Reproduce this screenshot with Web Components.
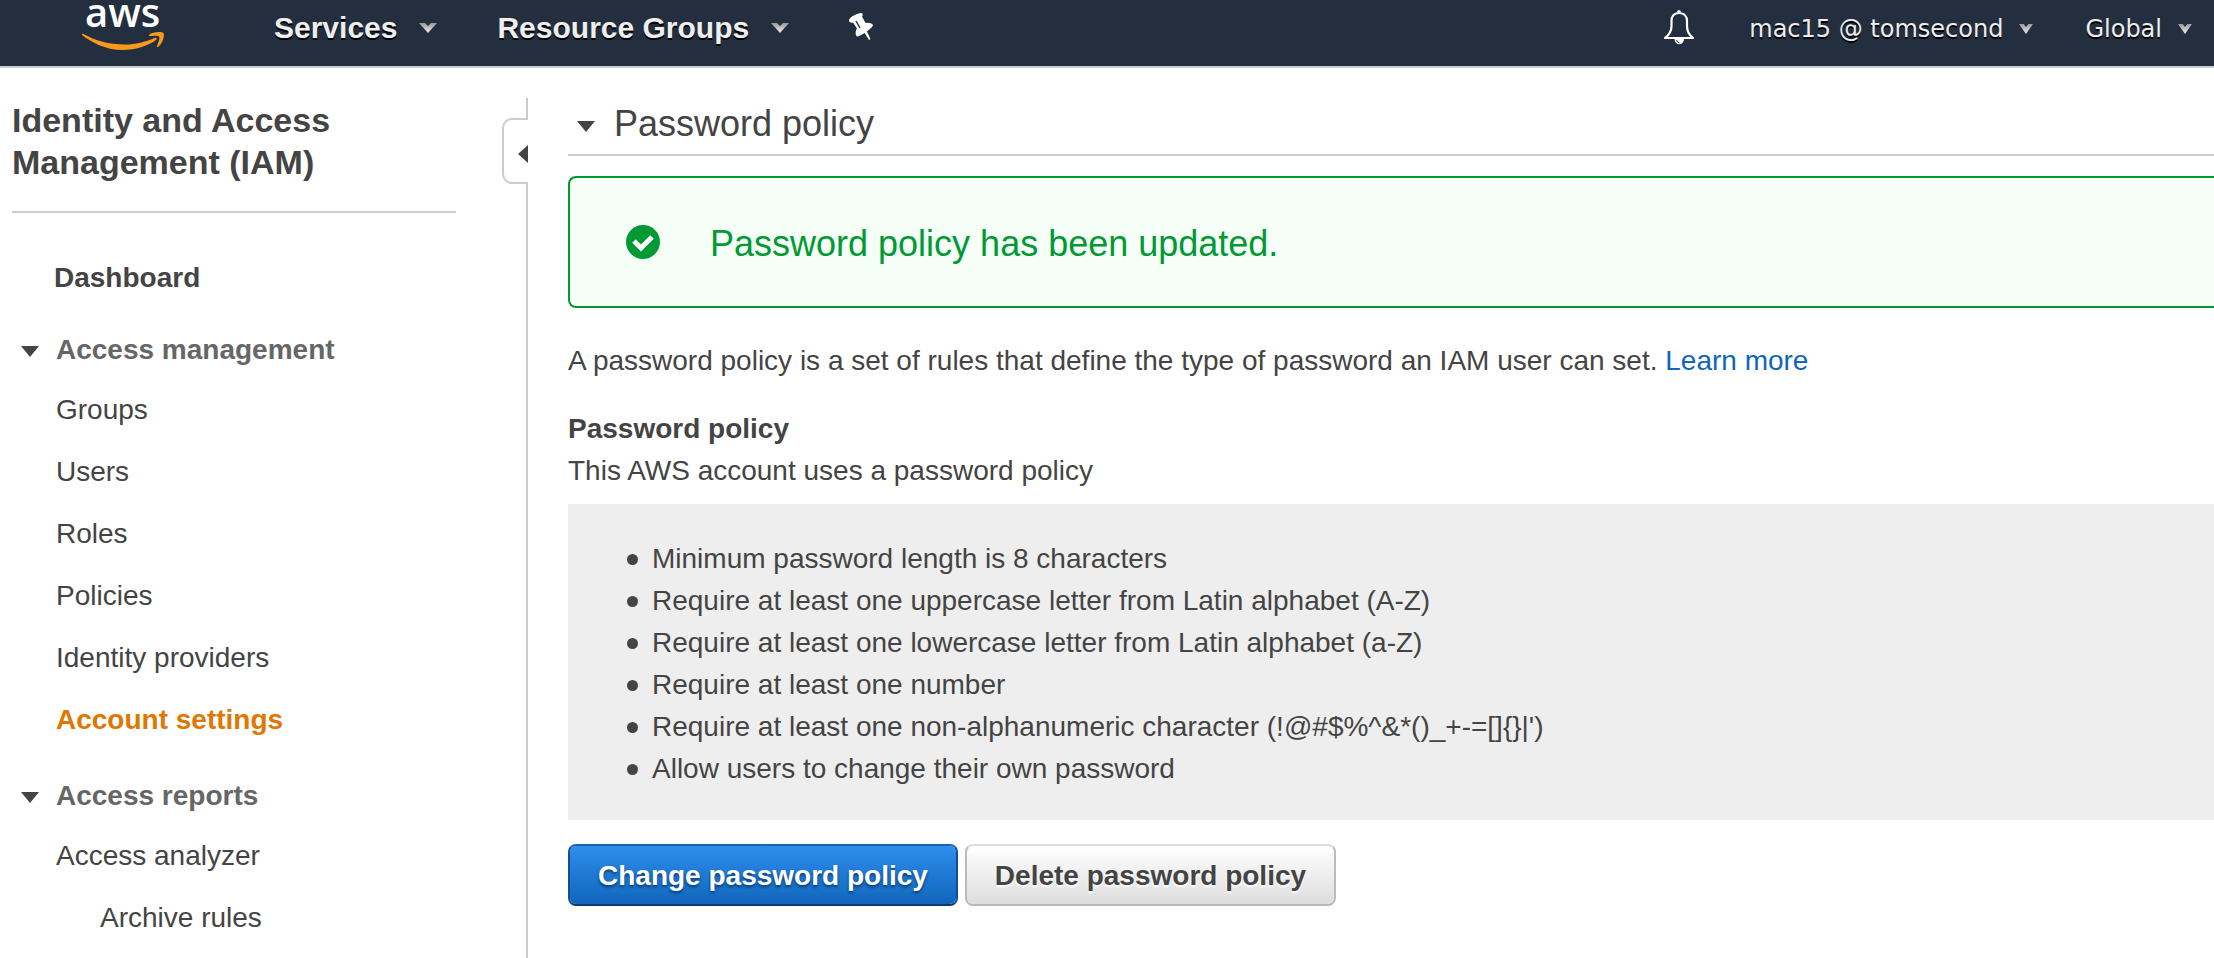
<!DOCTYPE html>
<html lang="en">
<head>
<meta charset="utf-8">
<title>IAM - Account settings</title>
<style>
  html, body { margin: 0; height: 100%; }
  body { font: 28px/42px "Liberation Sans", Arial, sans-serif; color: #444; background: #fff; overflow: hidden; }
</style>
</head>
<body>
<iam-console></iam-console>

<template id="iam-console">
  <style>
    :host { display: flex; flex-direction: column; height: 100vh; overflow: hidden; }
    .body { display: grid; grid-template-columns: 528px minmax(0, 1fr); flex: 1; min-height: 0; }
    main { padding: 32px 0 0 40px; }
    .intro { margin: 32px 0 26px; }
    h2 { margin: 0; font-size: 28px; line-height: 42px; }
    .status { margin: 0 0 12px; }
    .actions { display: flex; gap: 7px; margin-top: 24px; }
    a { color: #1166bb; text-decoration: none; }
  </style>
  <top-bar></top-bar>
  <div class="body">
    <side-nav></side-nav>
    <main>
      <section-title>Password policy</section-title>
      <flash-message>Password policy has been updated.</flash-message>
      <p class="intro">A password policy is a set of rules that define the type of password an IAM user can set. <a href="#learn">Learn more</a></p>
      <h2>Password policy</h2>
      <p class="status">This AWS account uses a password policy</p>
      <policy-rules></policy-rules>
      <div class="actions">
        <action-button kind="primary">Change password policy</action-button>
        <action-button>Delete password policy</action-button>
      </div>
    </main>
  </div>
</template>

<template id="top-bar">
  <style>
    :host { display: flex; align-items: center; flex: none; height: 66px; padding: 0 20px 10px 82px; box-sizing: border-box;
      background: #232f3e; box-shadow: 0 2px 0 #ccc; margin-bottom: 2px; color: #eee; }
    .logo { display: block; flex: none; width: 82px; height: 56px; margin-right: 110px; }
    .logo svg { overflow: visible; }
    .pin { flex: none; width: 24px; height: 30px; }
    .bell { flex: none; width: 32px; height: 40px; margin: 0 54px 0 auto; }
    nav, .account { display: flex; align-items: center; }
    nav { gap: 60px; }
    .account { gap: 52px; padding: 2px 2px 0 0; }
  </style>
  <a class="logo" href="#home" aria-label="AWS home">
    <svg width="82" height="56" viewBox="0 0 82 56" aria-hidden="true">
      <text x="3" y="27" font-family="Open Sans" font-weight="600" font-size="40" fill="#fff">aws</text>
      <path d="M0 35C9 42 23 50 41 50C53 50 66 46 74 40C75.500 38.500 74.500 37 72.500 38C63 42 54 44.500 43 44.500C27 44.500 13 40.500 1.500 34C.5 33.500-.5 34 0 35Z" fill="#f8991d"/>
      <path d="M67 35C70 31.500 80 31.500 81.500 33C83 35.500 80.500 43.500 76.500 46.500C75.500 47.500 74.500 47 75 46C77 41 78 38 77 36.500C76 35 71 36 68 36C67 36 66.500 35.500 67 35Z" fill="#f8991d"/>
    </svg>
  </a>
  <nav>
    <bar-menu size="large">Services</bar-menu>
    <bar-menu size="large">Resource Groups</bar-menu>
    <svg class="pin" viewBox="0 0 24 30" aria-hidden="true" fill="#fff">
      <path d="M0 7.500C0 4 9 0 12 0C13.500 0 14.500 2 13 3.500L16.500 10C19 9.500 23 10 24 12C24 15 11 23.500 8 23.500C6 22 6.500 17.500 8 15.500L4 9.500C2.500 10 0 9.500 0 7.500Z"/>
      <path d="M15 19L17.500 17.500L21.500 26L20 27Z"/>
      <path d="M7 8L11 15" stroke="#232f3e" stroke-width="1.500"/>
    </svg>
  </nav>
  <svg class="bell" viewBox="0 0 32 40" aria-hidden="true">
    <path d="M14 4.500a2 2.500 0 0 1 4 0z M11.500 31h9.500a4.500 5 0 0 1-9.500 0z" fill="#fff"/>
    <path d="M16 5C10.500 5 8.500 9 8.500 13V18C8.500 23.500 6 27 2 30H30C26 27 24 23.500 24 18V13C24 9 21.500 5 16 5Z" fill="none" stroke="#fff" stroke-width="2.200" stroke-linejoin="round"/>
    <path d="M13.500 32Q14 34.500 16.500 35" fill="none" stroke="#232f3e" stroke-width="1"/>
  </svg>
  <div class="account">
    <bar-menu>mac15 @ tomsecond</bar-menu>
    <bar-menu>Global</bar-menu>
  </div>
</template>

<template id="bar-menu">
  <style>
    :host { display: block; flex: none; }
    button { display: flex; align-items: center; gap: 16px; border: 0; padding: 0; background: none; color: inherit;
      font: 24px/32px "DejaVu Sans", Verdana, sans-serif; text-shadow: 0 2px 0 #000; white-space: nowrap; }
    svg { width: 14px; height: 10px; }
    :host([size="large"]) button { gap: 22px; font: bold 30px/32px "Liberation Sans", Arial, sans-serif; }
    :host([size="large"]) svg { width: 18px; height: 10px; }
  </style>
  <button type="button"><slot></slot>
    <svg viewBox="0 0 18 10" preserveAspectRatio="none" aria-hidden="true">
      <defs><linearGradient id="g" x1="0" y1="0" x2="0" y2="1"><stop offset="0" stop-color="#999"/><stop offset="1" stop-color="#eee"/></linearGradient></defs>
      <path d="M0 0H6L9 3L12 0H18L9 10Z" fill="url(#g)"/>
    </svg>
  </button>
</template>

<template id="side-nav">
  <style>
    :host { display: grid; grid-template-columns: minmax(0, 1fr) 26px; padding-left: 12px; min-height: 0; overflow: hidden; }
    nav { padding-top: 31px; }
    h1 { margin: 0 46px 44px 0; padding-bottom: 28px; border-bottom: 2px solid #ccc; font-size: 34px; line-height: 42px; }
    .rail { display: flex; flex-direction: column; padding-top: 30px; }
    .line { width: 2px; align-self: flex-end; background: #ccc; }
    .line.top { height: 20px; }
    .line.rest { flex: 1; }
    .rail button { display: flex; align-items: center; justify-content: flex-end; height: 66px; padding: 6px 0 0; box-sizing: border-box;
      background: #fff; border: 2px solid #ccc; border-right: 0; border-radius: 10px 0 0 10px; }
  </style>
  <nav aria-label="IAM">
    <h1>Identity and Access Management (IAM)</h1>
    <nav-item kind="top">Dashboard</nav-item>
    <nav-item kind="group">Access management</nav-item>
    <nav-item>Groups</nav-item>
    <nav-item>Users</nav-item>
    <nav-item>Roles</nav-item>
    <nav-item>Policies</nav-item>
    <nav-item>Identity providers</nav-item>
    <nav-item kind="current">Account settings</nav-item>
    <nav-item kind="group">Access reports</nav-item>
    <nav-item>Access analyzer</nav-item>
    <nav-item kind="nested">Archive rules</nav-item>
  </nav>
  <div class="rail">
    <span class="line top"></span>
    <button type="button" aria-label="Collapse navigation">
      <svg width="10" height="18" viewBox="0 0 10 18" aria-hidden="true"><path d="M10 0V18L0 9Z" fill="#444"/></svg>
    </button>
    <span class="line rest"></span>
  </div>
</template>

<template id="nav-item">
  <style>
    :host { display: flex; align-items: center; height: 42px; padding-left: 44px; margin-bottom: 20px; }
    a { color: inherit; text-decoration: none; white-space: nowrap; }
    svg { display: none; width: 18px; height: 11px; margin: 2px 17px 0 0; }
    :host([kind="top"]) { font-weight: bold; padding-left: 42px; margin-bottom: 30px; }
    :host([kind="group"]) { font-weight: bold; color: #666; padding-left: 9px; margin-bottom: 18px; }
    :host([kind="group"]) svg { display: block; }
    :host([kind="current"]) { font-weight: bold; color: #e07700; margin-bottom: 34px; }
    :host([kind="nested"]) { padding-left: 88px; }
  </style>
  <svg viewBox="0 0 18 11" aria-hidden="true"><path d="M0 0H18L9 11Z" fill="#444"/></svg>
  <a href="#item"><slot></slot></a>
</template>

<template id="section-title">
  <style>
    :host { display: block; border-bottom: 2px solid #ccc; padding-bottom: 9px; margin-bottom: 20px; }
    h1 { display: flex; align-items: center; gap: 19px; margin: 0; padding: 3px 0 0 9px; font-size: 36px; line-height: 42px; font-weight: normal; }
    svg { width: 18px; height: 11px; margin-top: 4px; }
  </style>
  <h1><svg viewBox="0 0 18 11" aria-hidden="true"><path d="M0 0H18L9 11Z" fill="#444"/></svg><slot></slot></h1>
</template>

<template id="flash-message">
  <style>
    :host { display: flex; align-items: center; gap: 50px; height: 132px; padding-left: 56px; box-sizing: border-box;
      border: 2px solid #093; border-right: 0; border-radius: 8px 0 0 8px; background: #f6fff7; color: #093; font-size: 36px; line-height: 42px; }
    svg { flex: none; width: 34px; height: 34px; }
    span { padding-top: 4px; }
  </style>
  <svg viewBox="0 0 34 34" aria-hidden="true"><circle cx="17" cy="17" r="17" fill="#093"/><path d="M8 16L15 23L26 12" fill="none" stroke="#fff" stroke-width="5"/></svg>
  <span role="status"><slot></slot></span>
</template>

<template id="policy-rules">
  <style>
    :host { display: block; padding: 34px 0 30px; background: #eee; }
    ul { margin: 0; padding-left: 59px; list-style: none; }
    li { display: flex; align-items: center; gap: 14px; }
    li::before { content: ""; width: 11px; height: 11px; border-radius: 50%; background: #444; }
  </style>
  <ul>
    <li>Minimum password length is 8 characters</li>
    <li>Require at least one uppercase letter from Latin alphabet (A-Z)</li>
    <li>Require at least one lowercase letter from Latin alphabet (a-Z)</li>
    <li>Require at least one number</li>
    <li>Require at least one non-alphanumeric character (!@#$%^&amp;*()_+-=[]{}|')</li>
    <li>Allow users to change their own password</li>
  </ul>
</template>

<template id="action-button">
  <style>
    :host { display: block; }
    button { height: 62px; padding: 2px 28px 0; border: 2px solid; border-color: #ddd #bbb #b7b7b7; border-radius: 8px; box-sizing: border-box;
      background: linear-gradient(#fff, #ddd) padding-box; color: #444; font: bold 28px/42px "Liberation Sans", Arial, sans-serif;
      text-shadow: 0 2px 2px #fff; white-space: nowrap; }
    :host([kind="primary"]) button { border-color: #1765b5 #11508f #0a3c70; background: linear-gradient(#2e8ded, #1166bb) padding-box;
      color: #fff; text-shadow: 0 2px 3px #0a3c70; }
  </style>
  <button type="button"><slot></slot></button>
</template>

<script>
  for (const name of ["action-button", "policy-rules", "flash-message", "section-title", "nav-item", "bar-menu", "side-nav", "top-bar", "iam-console"]) {
    customElements.define(name, class extends HTMLElement {
      constructor() {
        super();
        this.attachShadow({ mode: "open" }).append(document.getElementById(name).content.cloneNode(true));
      }
    });
  }
</script>
</body>
</html>
